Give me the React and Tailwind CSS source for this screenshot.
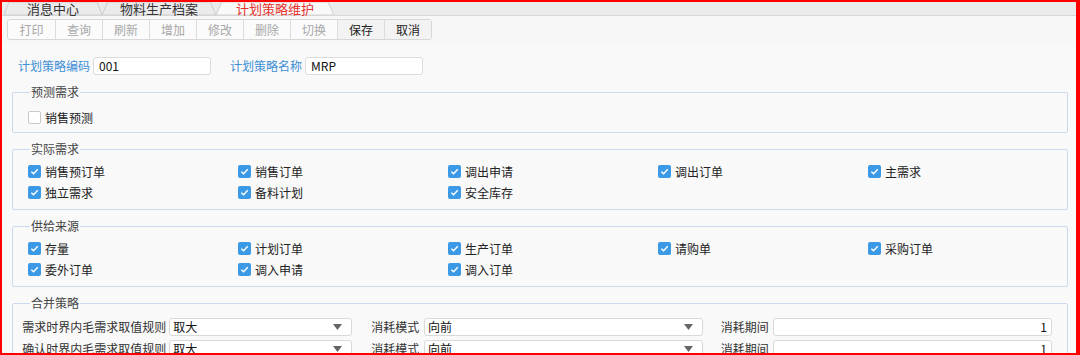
import React from 'react';

const font = { fontFamily: '"Noto Sans CJK SC", "Microsoft YaHei", sans-serif' };

const tabs = [
  { label: '消息中心', w: 'w-[98px]' },
  { label: '物料生产档案', w: 'w-[114px]' },
  { label: '计划策略维护', w: 'w-[118px]', active: true },
];

const tools = [
  { label: '打印' },
  { label: '查询' },
  { label: '刷新' },
  { label: '增加' },
  { label: '修改' },
  { label: '删除' },
  { label: '切换' },
  { label: '保存', on: true },
  { label: '取消', on: true },
];

const actual = [
  ['销售预订单', '销售订单', '调出申请', '调出订单', '主需求'],
  ['独立需求', '备料计划', '安全库存'],
];

const supply = [
  ['存量', '计划订单', '生产订单', '请购单', '采购订单'],
  ['委外订单', '调入申请', '调入订单'],
];

const Tab = ({ label, w, active }) => (
  <div className={`relative ${w} h-full flex items-center justify-center`}>
    <svg className="absolute inset-0 w-full h-full" viewBox="0 0 100 14" preserveAspectRatio="none">
      <polygon
        points="0,14 5,0 95,0 100,14"
        fill={active ? '#f9f9f9' : '#ebebeb'}
        stroke="#b9b9b9"
        strokeWidth="0.6"
        vectorEffect="non-scaling-stroke"
      />
    </svg>
    <span className={`relative text-[13px] leading-none ${active ? 'text-[#e5322d]' : 'text-[#333]'}`}>{label}</span>
  </div>
);

const Check = ({ label, checked = true }) => (
  <label className="flex items-center gap-[4px] h-[21px] text-[12px] text-[#222]">
    {checked ? (
      <span className="w-[13px] h-[13px] rounded-[2px] bg-[#3b99e6] flex items-center justify-center">
        <svg width="9" height="9" viewBox="0 0 10 10">
          <path d="M1.5 5.2 L4 7.5 L8.6 2.6" fill="none" stroke="#fff" strokeWidth="1.6" />
        </svg>
      </span>
    ) : (
      <span className="w-[13px] h-[13px] rounded-[2px] border border-[#c9c9c9] bg-white" />
    )}
    <span>{label}</span>
  </label>
);

const Group = ({ title, h, children }) => (
  <fieldset className={`ml-[10px] mr-[8px] min-w-0 ${h} border border-[#c9dbed] rounded-[2px] px-[15px]`}>
    <legend className="ml-[2px] px-[1px] text-[12px] leading-[14px] text-[#444]">{title}</legend>
    {children}
  </fieldset>
);

const CheckGrid = ({ rows }) => (
  <div className="flex flex-col pt-[5px]">
    {rows.map((row, i) => (
      <div key={i} className="grid grid-cols-[210px_210px_210px_210px_190px]">
        {row.map((c) => (
          <Check key={c} label={c} />
        ))}
      </div>
    ))}
  </div>
);

const Select = ({ value, w }) => (
  <div className={`${w} h-[18px] bg-white border border-[#d9d9d9] rounded-[3px] flex items-center justify-between pl-[3px] pr-[9px]`}>
    <span className="text-[12px] text-[#111] leading-none">{value}</span>
    <svg width="9" height="6" viewBox="0 0 9 6">
      <polygon points="0,0 9,0 4.5,6" fill="#666" />
    </svg>
  </div>
);

const MergeRow = ({ label }) => (
  <div className="flex items-center h-[18px]">
    <span className="w-[152px] text-[12px] text-[#333] text-right pr-[3px] whitespace-nowrap">{label}</span>
    <Select value="取大" w="w-[184px]" />
    <span className="ml-[19px] w-[53px] text-[12px] text-[#333] whitespace-nowrap">消耗模式</span>
    <Select value="向前" w="w-[280px]" />
    <span className="ml-[18px] w-[53px] text-[12px] text-[#333] whitespace-nowrap">消耗期间</span>
    <div className="w-[280px] h-[18px] bg-white border border-[#d9d9d9] rounded-[3px] flex items-center justify-end pr-[4px] text-[12px] text-[#111]">1</div>
  </div>
);

export default function App() {
  return (
    <div style={font} className="w-[1080px] h-[355px] overflow-hidden border-2 border-r-[4px] border-[#ff0000] bg-[#f9f9f9] flex flex-col">
      {/* tabs */}
      <div className="h-[14px] bg-[#ebebeb] flex items-end pl-[2px] border-b border-[#d6d6d6] shrink-0">
        {tabs.map((t) => (
          <Tab key={t.label} {...t} />
        ))}
      </div>

      {/* toolbar */}
      <div className="h-[27px] flex items-center px-[5px] shrink-0 bg-[#f7f7f7]">
        <div className="flex h-[21px] border border-[#d7d7d7] rounded-[3px] bg-[#fbfbfb]">
          {tools.map((t, i) => (
            <div
              key={t.label}
              className={`w-[47px] flex items-center justify-center text-[12px] ${i > 0 ? 'border-l border-[#dcdcdc]' : ''} ${t.on ? 'text-[#222] bg-[#f3f3f3]' : 'text-[#a8a8a8]'}`}
            >
              {t.label}
            </div>
          ))}
        </div>
      </div>

      {/* code / name */}
      <div className="flex items-center h-[18px] mt-[14px] pl-[16px] shrink-0">
        <span className="text-[12px] text-[#3d8fd6] mr-[3px]">计划策略编码</span>
        <div className="w-[118px] h-[18px] bg-white border border-[#dcdcdc] rounded-[3px] flex items-center pl-[5px] text-[12px] text-[#111]">001</div>
        <span className="text-[12px] text-[#3d8fd6] ml-[19px] mr-[3px]">计划策略名称</span>
        <div className="w-[118px] h-[18px] bg-white border border-[#dcdcdc] rounded-[3px] flex items-center pl-[5px] text-[12px] text-[#111]">MRP</div>
      </div>

      <div className="flex flex-col gap-[9px] mt-[10px]">
        <Group title="预测需求" h="h-[48px]">
          <div className="pt-[8px]">
            <Check label="销售预测" checked={false} />
          </div>
        </Group>

        <Group title="实际需求" h="h-[68px]">
          <CheckGrid rows={actual} />
        </Group>

        <Group title="供给来源" h="h-[68px]">
          <CheckGrid rows={supply} />
        </Group>

        <Group title="合并策略" h="h-[80px]">
          <div className="flex flex-col gap-[4px] pt-[8px] -ml-[10px]">
            <MergeRow label="需求时界内毛需求取值规则" />
            <MergeRow label="确认时界内毛需求取值规则" />
          </div>
        </Group>
      </div>
    </div>
  );
}
